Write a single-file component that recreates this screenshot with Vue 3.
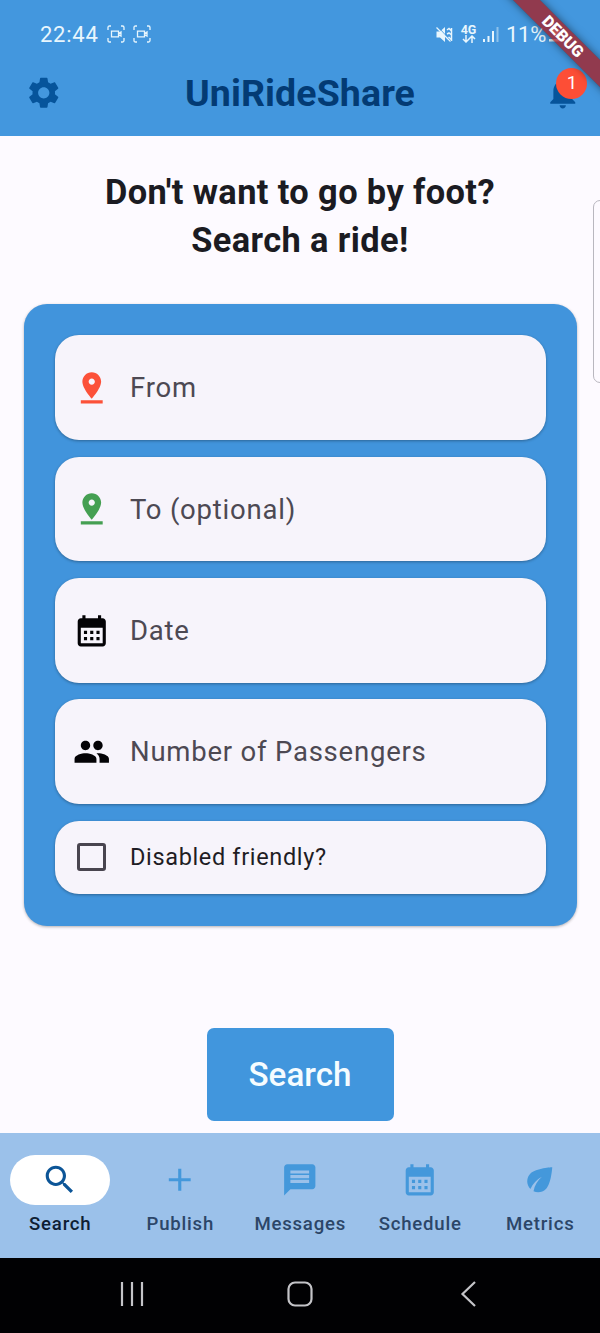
<script setup>
const P = {
  pin: 'M18 8c0-3.31-2.69-6-6-6S6 4.69 6 8c0 4.5 6 11 6 11s6-6.5 6-11zm-8 0c0-1.1.9-2 2-2s2 .9 2 2-.89 2-2 2c-1.1 0-2-.9-2-2zM5 20v2h14v-2H5z',
  calendar: 'M19 4h-1V2h-2v2H8V2H6v2H5c-1.11 0-1.99.9-1.99 2L3 20c0 1.1.89 2 2 2h14c1.1 0 2-.9 2-2V6c0-1.1-.9-2-2-2zm0 16H5V10h14v10zM9 14H7v-2h2v2zm4 0h-2v-2h2v2zm4 0h-2v-2h2v2zm-8 4H7v-2h2v2zm4 0h-2v-2h2v2zm4 0h-2v-2h2v2z',
  people: 'M16 11c1.66 0 2.99-1.34 2.99-3S17.66 5 16 5c-1.66 0-3 1.34-3 3s1.34 3 3 3zm-8 0c1.66 0 2.99-1.34 2.99-3S9.66 5 8 5C6.34 5 5 6.34 5 8s1.34 3 3 3zm0 2c-2.33 0-7 1.17-7 3.5V19h14v-2.5c0-2.33-4.67-3.5-7-3.5zm8 0c-.29 0-.62.02-.97.05 1.16.84 1.97 1.97 1.97 3.45V19h6v-2.5c0-2.33-4.67-3.5-7-3.5z',
  search: 'M15.5 14h-.79l-.28-.27C15.41 12.59 16 11.11 16 9.5 16 5.91 13.09 3 9.5 3S3 5.91 3 9.5 5.91 16 9.5 16c1.61 0 3.09-.59 4.23-1.57l.27.28v.79l5 4.99L20.49 19l-4.99-5zm-6 0C7.01 14 5 11.99 5 9.5S7.01 5 9.5 5 14 7.01 14 9.5 11.99 14 9.5 14z',
  add: 'M19 13h-6v6h-2v-6H5v-2h6V5h2v6h6v2z',
  message: 'M20 2H4c-1.1 0-1.99.9-1.99 2L2 22l4-4h14c1.1 0 2-.9 2-2V4c0-1.1-.9-2-2-2zm-2 12H6v-2h12v2zm0-3H6V9h12v2zm0-3H6V6h12v2z',
  eco: 'M6.05 8.05c-2.73 2.73-2.73 7.15-.02 9.88 1.47-3.4 4.09-6.24 7.36-7.93-2.77 2.34-4.71 5.61-5.39 9.32 2.6 1.23 5.8.78 7.95-1.37C19.43 14.47 20 4 20 4S9.53 4.57 6.05 8.05z',
}

const fields = [
  { label: 'From', icon: P.pin, tone: 'red' },
  { label: 'To (optional)', icon: P.pin, tone: 'green' },
  { label: 'Date', icon: P.calendar, tone: 'black' },
  { label: 'Number of Passengers', icon: P.people, tone: 'black' },
]

const tabs = [
  { label: 'Search', icon: P.search, active: true },
  { label: 'Publish', icon: P.add },
  { label: 'Messages', icon: P.message },
  { label: 'Schedule', icon: P.calendar },
  { label: 'Metrics', icon: P.eco },
]
</script>

<template>
  <div class="screen">
    <header class="top">
      <div class="status">
        <span class="clock">22:44</span>
        <svg v-for="n in 2" :key="n" class="rec" viewBox="0 0 18 18" fill="none" stroke="currentColor" stroke-width="1.3">
          <path d="M1 5V2.500Q1 1 2.500 1H4M14 1h1.500Q17 1 17 2.500V5M17 13v2.500Q17 17 15.500 17H14M4 17H2.500Q1 17 1 15.500V13" />
          <path d="M4.500 6.200h7v5.600h-7zM11.500 8.500l2.500-1.500v4l-2.500-1.500" />
        </svg>
        <span class="spacer"></span>
        <svg class="mute" viewBox="0 0 17 17">
          <path d="M.5 5.500H4L9 1v15l-5-4.500H.5z" fill="currentColor" />
          <path d="M11 4l2-1.500 2 2M11 8l2-1 2 1.500M11 12.500l2-1 2 2M15.500 2v13" fill="none" stroke="currentColor" stroke-width="1.500" />
          <path d="M2 1l13 14" stroke="#4397de" stroke-width="1" />
          <path d="M.5 1.500l14 14" stroke="currentColor" stroke-width="1.300" />
        </svg>
        <span class="net">
          <b>4G</b>
          <svg viewBox="0 0 14 8" fill="none" stroke="currentColor" stroke-width="1.500">
            <path d="M4 0v6.500M1 4l3 3 3-3M10 8V1.500M7 4l3-3 3 3" />
          </svg>
        </span>
        <svg class="signal" viewBox="0 0 16 16" fill="currentColor">
          <path d="M0 13h2v3H0zM4.500 10h2v6h-2zM9 5h2v11H9z" />
          <path d="M13.500 1h2v15h-2z" opacity=".45" />
        </svg>
        <span class="percent">11%</span>
        <svg class="charge" viewBox="0 0 14 18" fill="currentColor">
          <path d="M3 3l8 2v6l-5 1zM0 14h13v2.500H0z" />
        </svg>
      </div>
      <div class="appbar">
        <svg class="icon gear" viewBox="0 0 24 24">
          <path d="M19.140 12.940c.04-.3.060-.61.060-.94 0-.32-.02-.64-.07-.94l2.030-1.580c.18-.14.230-.41.120-.61l-1.920-3.320c-.12-.22-.37-.29-.59-.22l-2.390.96c-.5-.38-1.030-.7-1.620-.94l-.36-2.540c-.04-.24-.24-.41-.48-.41h-3.840c-.24 0-.43.17-.47.41l-.36 2.540c-.59.24-1.130.57-1.620.94l-2.390-.96c-.22-.08-.47 0-.59.22L2.740 8.870c-.12.21-.08.47.120.61l2.030 1.580c-.05.3-.09.63-.09.94s.02.64.070.94l-2.030 1.580c-.18.14-.23.41-.12.610l1.920 3.320c.12.22.37.29.59.220l2.390-.96c.5.380 1.030.7 1.620.94l.36 2.540c.05.24.24.41.48.41h3.840c.24 0 .44-.17.47-.41l.36-2.540c.59-.24 1.130-.56 1.620-.94l2.390.96c.22.080.47 0 .59-.22l1.920-3.320c.12-.22.070-.47-.12-.61l-2.010-1.580zM12 15.600c-1.980 0-3.600-1.620-3.600-3.600s1.620-3.600 3.600-3.600 3.600 1.620 3.600 3.600-1.620 3.600-3.600 3.600z" />
        </svg>
        <h1>UniRideShare</h1>
        <div class="bell">
          <svg class="icon" viewBox="0 0 24 24">
            <path d="M12 22c1.100 0 2-.9 2-2h-4c0 1.100.89 2 2 2zm6-6v-5c0-3.070-1.640-5.640-4.500-6.320V4c0-.83-.67-1.500-1.500-1.500s-1.500.67-1.500 1.500v.68C7.630 5.360 6 7.920 6 11v5l-2 2v1h16v-1l-2-2z" />
          </svg>
          <span class="badge">1</span>
        </div>
      </div>
      <div class="ribbon-clip"><div class="ribbon">DEBUG</div></div>
    </header>

    <main>
      <h2>Don't want to go by foot?<br />Search a ride!</h2>
      <section class="panel">
        <div v-for="f in fields" :key="f.label" class="field">
          <svg class="icon" :class="f.tone" viewBox="0 0 24 24"><path :d="f.icon" /></svg>
          <span>{{ f.label }}</span>
        </div>
        <div class="field check">
          <i class="box"></i>
          <span>Disabled friendly?</span>
        </div>
      </section>
      <button class="go">Search</button>
      <div class="edge"></div>
    </main>

    <nav class="tabs">
      <div v-for="t in tabs" :key="t.label" class="tab" :class="{ active: t.active }">
        <div class="pill"><svg class="icon" viewBox="0 0 24 24"><path :d="t.icon" /></svg></div>
        <span>{{ t.label }}</span>
      </div>
    </nav>

    <footer class="sys">
      <svg viewBox="0 0 28 28"><path d="M4 2v24M14 2v24M24 2v24" /></svg>
      <svg viewBox="0 0 28 28"><rect x="2.500" y="2.500" width="23" height="23" rx="6.500" /></svg>
      <svg viewBox="0 0 28 28"><path d="M21 2L8.500 14 21 26" /></svg>
    </footer>
  </div>
</template>

<style>
body { margin: 0; }
</style>

<style scoped>
.screen {
  width: 600px;
  height: 1333px;
  display: flex;
  flex-direction: column;
  overflow: hidden;
  background: #fdfaff;
  font-family: Roboto, "Liberation Sans", sans-serif;
}
.icon { width: 37.5px; height: 37.5px; fill: currentColor; display: block; flex: none; }
.top { position: relative; height: 136px; background: #4397de; flex: none; }
.status {
  height: 50px;
  padding: 18px 37px 0 40px;
  box-sizing: border-box;
  display: flex;
  align-items: center;
  color: #e8f6fd;
}
.clock { font-size: 22px; letter-spacing: 0.75px; width: 67px; }
.rec { width: 18px; height: 18px; margin-right: 8px; }
.spacer { flex: 1; }
.mute { width: 17px; height: 17px; margin-right: 8px; }
.net { width: 15px; display: flex; flex-direction: column; align-items: center; margin-right: 7px; }
.net b { font-size: 12.5px; line-height: 10px; font-weight: 700; }
.net svg { width: 14px; height: 8px; }
.signal { width: 16px; height: 16px; margin-right: 7px; }
.percent { font-size: 22px; width: 43px; letter-spacing: -0.3px; }
.charge { width: 14px; height: 18px; }
.appbar {
  height: 86px;
  padding: 0 18px 0 25px;
  display: flex;
  align-items: center;
  justify-content: space-between;
  color: #06549b;
}
h1 { margin: 0 7px 0 0; color: #033b74; font-size: 37.5px; line-height: 44px; font-weight: 700; letter-spacing: 0.1px; }
.bell { position: relative; }
.bell .icon { color: #06549b; }
.badge {
  position: absolute;
  left: 12px;
  top: -6.5px;
  width: 31px;
  height: 31px;
  border-radius: 50%;
  background: #fd4e36;
  color: #fff;
  font-size: 18.5px;
  line-height: 31px;
  text-align: center;
}
.ribbon-clip { position: absolute; top: 0; right: 0; width: 110px; height: 110px; overflow: hidden; }
.ribbon {
  position: absolute;
  left: -27.5px;
  top: 27px;
  width: 200px;
  height: 19px;
  transform: rotate(45deg);
  background: rgba(171, 27, 30, 0.75);
  box-shadow: 0 0 9px rgba(0, 0, 0, 0.5);
  color: #fff;
  font-size: 16px;
  line-height: 19px;
  font-weight: 900;
  text-align: center;
}
main { position: relative; flex: 1; display: flex; flex-direction: column; align-items: center; }
h2 {
  margin: 32px 0 0;
  color: #1b1b22;
  font-size: 34.4px;
  line-height: 48px;
  font-weight: 700;
  letter-spacing: 0.39px;
  text-align: center;
  white-space: nowrap;
}
.panel {
  width: 553px;
  height: 622px;
  margin-top: 40px;
  padding: 31.4px 31px 0;
  box-sizing: border-box;
  border-radius: 23px;
  background: #4194dc;
  box-shadow: 0 1px 3px rgba(0, 0, 0, 0.3);
  display: flex;
  flex-direction: column;
  gap: 16.5px;
}
.field {
  height: 104.8px;
  padding-left: 18.5px;
  box-sizing: border-box;
  border-radius: 24px;
  background: #f7f4fb;
  box-shadow: 0 1px 3px rgba(0, 0, 0, 0.32);
  display: flex;
  align-items: center;
  gap: 19.5px;
  color: #4d4953;
  font-size: 27.5px;
  letter-spacing: 0.78px;
  white-space: nowrap;
}
.check { height: 73.5px; color: #1f1d24; font-size: 23.5px; letter-spacing: 0.65px; }
.box { width: 29px; height: 28px; box-sizing: border-box; border: 3px solid #49454f; border-radius: 3px; margin: 0 4.5px 0 4px; }
.red { color: #fc5139; }
.green { color: #459f52; }
.black { color: #040306; }
.go {
  margin-top: 102px;
  width: 187px;
  height: 93px;
  border: 0;
  padding: 0;
  border-radius: 7px;
  background: #4196dd;
  color: #f5fcff;
  font: 500 33.2px Roboto, "Liberation Sans", sans-serif;
}
.edge {
  position: absolute;
  right: -11px;
  top: 64px;
  width: 16px;
  height: 181px;
  border: 1.5px solid #b9b7bf;
  border-radius: 7px;
}
.tabs { height: 125px; flex: none; display: flex; background: #9bc1ea; }
.tab { flex: 1; display: flex; flex-direction: column; align-items: center; padding-top: 22px; color: #4498db; }
.pill { width: 100px; height: 50px; border-radius: 25px; display: flex; align-items: center; justify-content: center; }
.tab span { margin: 7px 0 0 0.5px; font-size: 18.6px; line-height: 25px; font-weight: 500; letter-spacing: 0.78px; color: #2c4668; }
.active { color: #0c5597; }
.active .pill { background: #fff; }
.tab.active span { color: #0e1e33; }
.sys { height: 75px; padding-bottom: 3px; box-sizing: border-box; flex: none; background: #010103; display: flex; align-items: center; justify-content: center; gap: 140px; }
.sys svg { width: 28px; height: 28px; fill: none; stroke: #c4c4c8; stroke-width: 2.2; }
</style>
